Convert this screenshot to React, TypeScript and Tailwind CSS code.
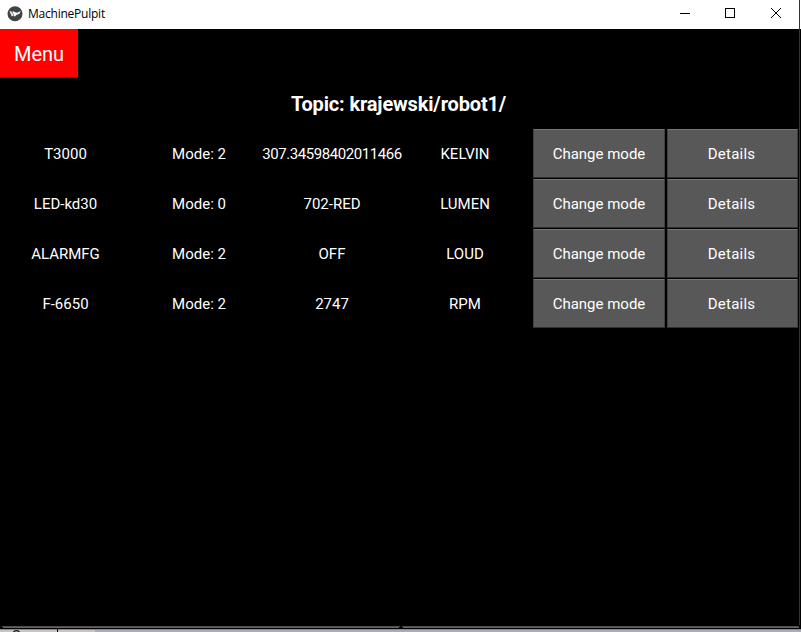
const rows = [
  ["T3000", "Mode: 2", "307.34598402011466", "KELVIN"],
  ["LED-kd30", "Mode: 0", "702-RED", "LUMEN"],
  ["ALARMFG", "Mode: 2", "OFF", "LOUD"],
  ["F-6650", "Mode: 2", "2747", "RPM"],
];

function KivyLogo() {
  return (
    <svg className="ml-[7px] h-4 w-4 shrink-0" viewBox="0 0 16 16">
      <circle cx="8" cy="7.7" r="7.5" fill="#414345" />
      <path d="M2.4 5 5 5.8 6.6 10 4.7 10.2Z" fill="#e8e8e8" />
      <path d="M5.5 5.2 7.7 5.8 8.4 9.2 7 10.3Z" fill="#fff" />
      <path d="M8.2 6 10 6.7 13.8 4.9 12.3 8 9.8 8.8 7.5 11Z" fill="#f4f4f4" />
    </svg>
  );
}

function TitleBar() {
  return (
    <header className="flex h-[29px] items-start bg-white text-black">
      <div className="flex h-[27px] items-center">
        <KivyLogo />
        <span className="ml-[5px] font-['Open_Sans','Noto_Sans',sans-serif] text-[12px] leading-4 tracking-[-0.23px]">
          MachinePulpit
        </span>
      </div>
      <div className="ml-auto flex h-[26px] w-[139px] items-center">
        <svg className="h-[26px] w-full" viewBox="0 0 139 26" fill="none" stroke="#000" shapeRendering="crispEdges">
          <path d="M20 13.5h10" />
          <path d="M65.5 8.5h9v9h-9z" />
          <path d="m111 8 10 10m0-10-10 10" shapeRendering="auto" />
        </svg>
      </div>
    </header>
  );
}

function GridButton({ children, className }: { children: string; className: string }) {
  return (
    <button
      className={`flex items-center justify-center rounded-[1px] border border-x-[#404040] border-t-[#777] border-b-[#303030] bg-[#585858] pt-px ${className}`}
    >
      {children}
    </button>
  );
}

function DesktopStrip() {
  return (
    <svg className="block h-[7px] w-[801px]" viewBox="0 0 801 7" shapeRendering="crispEdges">
      <path fill="#000" d="M0 0h801v7H0z" />
      <path fill="#4e4e4e" d="M2 1h398v1H2zM402 1h397v1H402z" />
      <path fill="#656565" d="M3 2h396v1H3zM403 2h396v1H403z" />
      <path fill="#c7c5c5" d="M0 4h95v3H0z" />
      <path fill="#a9adba" d="M95 4h706v3H95z" />
      <path fill="#858891" d="M0 4h801v1H0z" />
      <path fill="#000" d="M57 4h1v3h-1z" />
      <path stroke="#111" strokeWidth="1.3" fill="none" shapeRendering="auto" d="M13.5 7.2c1-2 5-2 6 0" />
    </svg>
  );
}

export default function App() {
  return (
    <div className="flex h-[632px] w-[801px] flex-col overflow-hidden bg-black font-[Roboto,sans-serif] text-white">
      <div className="flex min-h-0 flex-1">
        <div className="flex w-[799px] flex-col">
          <TitleBar />
          <button className="flex h-[49px] w-[78px] items-center justify-center rounded-r-[1px] border-b border-[#a00000] bg-[#ff0000] pt-px text-[20px] leading-6">
            Menu
          </button>
          <h1 className="mt-[14px] h-6 pr-[2px] text-center text-[20px] leading-6 font-bold tracking-[-0.15px]">
            Topic: krajewski/robot1/
          </h1>
          <main className="mt-[13px] flex flex-col gap-px text-[15px] leading-5">
            {rows.map((row) => (
              <div key={row[0]} className="grid h-[49px] grid-cols-[131px_132px_130px_132px_132px_131px] gap-x-[2px]">
                {row.map((value, i) => (
                  <div
                    key={i}
                    className={`flex items-center justify-center whitespace-nowrap ${value.length > 12 ? "tracking-[-0.43px]" : ""}`}
                  >
                    {value}
                  </div>
                ))}
                <GridButton className="">Change mode</GridButton>
                <GridButton className="pr-[2px] tracking-[0.25px]">Details</GridButton>
              </div>
            ))}
          </main>
        </div>
        <div className="w-px bg-[#353535]" />
        <div className="w-px pb-[596px]">
          <div className="h-[29px] bg-white" />
        </div>
      </div>
      <DesktopStrip />
    </div>
  );
}
